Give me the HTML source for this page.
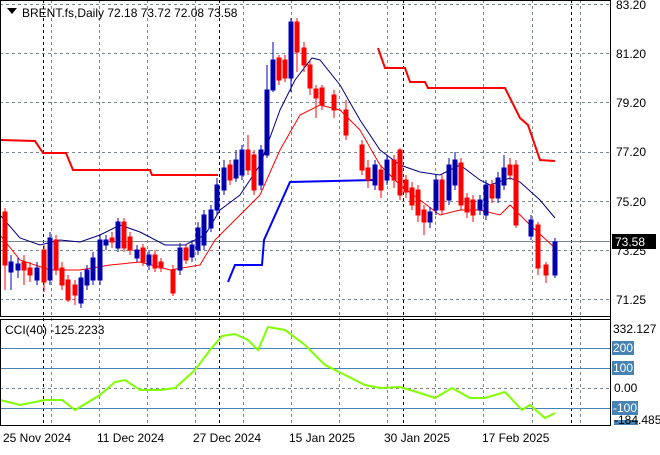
<!DOCTYPE html>
<html><head><meta charset="utf-8"><style>
body{margin:0;background:#fff;width:660px;height:450px;overflow:hidden;font-family:"Liberation Sans",sans-serif}
svg text{font-family:"Liberation Sans",sans-serif;font-size:12px;fill:#000}
</style></head><body>
<svg width="660" height="450" viewBox="0 0 660 450" xmlns="http://www.w3.org/2000/svg">
<g stroke="#7a8593" stroke-dasharray="3,3" stroke-width="1">
<line x1="0" y1="4.5" x2="610" y2="4.5"/><line x1="0" y1="53.5" x2="610" y2="53.5"/><line x1="0" y1="102.5" x2="610" y2="102.5"/><line x1="0" y1="152.5" x2="610" y2="152.5"/><line x1="0" y1="201.5" x2="610" y2="201.5"/><line x1="0" y1="250.5" x2="610" y2="250.5"/><line x1="0" y1="299.5" x2="610" y2="299.5"/>
<line x1="0" y1="388.5" x2="610" y2="388.5"/>
<line x1="51.5" y1="0" x2="51.5" y2="426"/><line x1="99.5" y1="0" x2="99.5" y2="426"/><line x1="147.5" y1="0" x2="147.5" y2="426"/><line x1="195.5" y1="0" x2="195.5" y2="426"/><line x1="243.5" y1="0" x2="243.5" y2="426"/><line x1="291.5" y1="0" x2="291.5" y2="426"/><line x1="339.5" y1="0" x2="339.5" y2="426"/><line x1="387.5" y1="0" x2="387.5" y2="426"/><line x1="435.5" y1="0" x2="435.5" y2="426"/><line x1="483.5" y1="0" x2="483.5" y2="426"/><line x1="532.5" y1="0" x2="532.5" y2="426"/><line x1="580.5" y1="0" x2="580.5" y2="426"/>
</g>
<g stroke="#000" stroke-dasharray="3,3"><line x1="43.5" y1="0" x2="43.5" y2="426"/><line x1="219.5" y1="0" x2="219.5" y2="426"/><line x1="403.5" y1="0" x2="403.5" y2="426"/><line x1="571.5" y1="0" x2="571.5" y2="426"/></g>
<g stroke="#4682b4"><line x1="0" y1="348.5" x2="610" y2="348.5"/><line x1="0" y1="368.5" x2="610" y2="368.5"/><line x1="0" y1="408.5" x2="610" y2="408.5"/></g>
<line x1="0" y1="241.5" x2="610" y2="241.5" stroke="#7a8593"/>
<!-- indicators -->
<polyline fill="none" stroke="#f00" stroke-width="2" points="0,140 35,141 43,153 66,153 73,170 150,170 152,175 218,175"/>
<polyline fill="none" stroke="#f00" stroke-width="2" points="378,48 385,68 405,68 410,82 425,82 428,88 505,88 520,118 528,125 540,160 555,161"/>
<polyline fill="none" stroke="#00f" stroke-width="2" points="228,282 235,265 262,265 264,240 290,182 375,180"/>
<polyline fill="none" stroke="#000080" stroke-width="1" points="0,215 20,238 40,245 60,240 80,242 100,235 120,225 140,232 165,245 185,245 205,235 220,210 240,195 260,165 280,110 295,80 312,58 320,60 340,85 360,120 380,150 400,165 420,172 440,175 460,165 480,180 490,185 510,178 520,182 540,200 555,218"/>
<polyline fill="none" stroke="#f00" stroke-width="1" points="0,235 20,260 50,270 80,270 110,265 140,262 170,270 200,265 215,240 240,215 260,195 280,150 300,115 320,105 340,110 360,130 380,165 400,185 420,200 440,215 460,210 480,210 500,215 510,205 530,225 555,248"/>
<!-- candles -->
<g stroke-width="1">
<g fill="#f00" stroke="#f00">
<line x1="5" y1="208" x2="5" y2="290"/><rect x="3" y="212" width="4" height="53"/>
<line x1="24" y1="255" x2="24" y2="285"/><rect x="22" y="262" width="4" height="8"/>
<line x1="30" y1="262" x2="30" y2="282"/><rect x="28" y="268" width="4" height="7"/>
<line x1="44" y1="245" x2="44" y2="292"/><rect x="42" y="250" width="4" height="32"/>
<line x1="56" y1="235" x2="56" y2="275"/><rect x="54" y="240" width="4" height="30"/>
<line x1="62" y1="262" x2="62" y2="290"/><rect x="60" y="268" width="4" height="17"/>
<line x1="68" y1="275" x2="68" y2="302"/><rect x="66" y="280" width="4" height="20"/>
<line x1="75" y1="280" x2="75" y2="305"/><rect x="73" y="285" width="4" height="10"/>
<line x1="112" y1="232" x2="112" y2="248"/><rect x="110" y="238" width="4" height="4"/>
<line x1="124" y1="218" x2="124" y2="252"/><rect x="122" y="222" width="4" height="26"/>
<line x1="130" y1="232" x2="130" y2="255"/><rect x="128" y="237" width="4" height="13"/>
<line x1="143" y1="244" x2="143" y2="266"/><rect x="141" y="248" width="4" height="14"/>
<line x1="155" y1="250" x2="155" y2="272"/><rect x="153" y="255" width="4" height="13"/>
<line x1="161" y1="258" x2="161" y2="272"/><rect x="159" y="262" width="4" height="6"/>
<line x1="173" y1="265" x2="173" y2="296"/><rect x="171" y="270" width="4" height="23"/>
<line x1="186" y1="244" x2="186" y2="264"/><rect x="184" y="248" width="4" height="12"/>
<line x1="230" y1="160" x2="230" y2="185"/><rect x="228" y="165" width="4" height="15"/>
<line x1="248" y1="135" x2="248" y2="175"/><rect x="246" y="150" width="4" height="20"/>
<line x1="254" y1="150" x2="254" y2="195"/><rect x="252" y="155" width="4" height="35"/>
<line x1="279" y1="55" x2="279" y2="85"/><rect x="277" y="58" width="4" height="22"/>
<line x1="285" y1="55" x2="285" y2="82"/><rect x="283" y="60" width="4" height="18"/>
<line x1="297" y1="18" x2="297" y2="72"/><rect x="295" y="22" width="4" height="30"/>
<line x1="304" y1="42" x2="304" y2="72"/><rect x="302" y="48" width="4" height="17"/>
<line x1="310" y1="60" x2="310" y2="95"/><rect x="308" y="65" width="4" height="23"/>
<line x1="316" y1="85" x2="316" y2="118"/><rect x="314" y="89" width="4" height="9"/>
<line x1="322" y1="85" x2="322" y2="110"/><rect x="320" y="88" width="4" height="17"/>
<line x1="334" y1="90" x2="334" y2="118"/><rect x="332" y="95" width="4" height="15"/>
<line x1="346" y1="100" x2="346" y2="140"/><rect x="344" y="110" width="4" height="25"/>
<line x1="362" y1="140" x2="362" y2="175"/><rect x="360" y="145" width="4" height="25"/>
<line x1="368" y1="160" x2="368" y2="188"/><rect x="366" y="168" width="4" height="12"/>
<line x1="381" y1="165" x2="381" y2="198"/><rect x="379" y="170" width="4" height="20"/>
<line x1="394" y1="155" x2="394" y2="188"/><rect x="392" y="160" width="4" height="20"/>
<line x1="400" y1="148" x2="400" y2="200"/><rect x="398" y="150" width="4" height="45"/>
<line x1="406" y1="175" x2="406" y2="198"/><rect x="404" y="180" width="4" height="12"/>
<line x1="412" y1="182" x2="412" y2="210"/><rect x="410" y="188" width="4" height="17"/>
<line x1="418" y1="185" x2="418" y2="222"/><rect x="416" y="190" width="4" height="25"/>
<line x1="424" y1="205" x2="424" y2="235"/><rect x="422" y="210" width="4" height="12"/>
<line x1="442" y1="175" x2="442" y2="215"/><rect x="440" y="180" width="4" height="30"/>
<line x1="461" y1="158" x2="461" y2="210"/><rect x="459" y="163" width="4" height="42"/>
<line x1="467" y1="193" x2="467" y2="218"/><rect x="465" y="198" width="4" height="14"/>
<line x1="473" y1="195" x2="473" y2="222"/><rect x="471" y="200" width="4" height="15"/>
<line x1="492" y1="180" x2="492" y2="203"/><rect x="490" y="185" width="4" height="13"/>
<line x1="510" y1="158" x2="510" y2="180"/><rect x="508" y="165" width="4" height="10"/>
<line x1="516" y1="160" x2="516" y2="228"/><rect x="514" y="165" width="4" height="60"/>
<line x1="538" y1="222" x2="538" y2="275"/><rect x="536" y="225" width="4" height="43"/>
<line x1="546" y1="262" x2="546" y2="283"/><rect x="544" y="265" width="4" height="10"/>
</g>
<g fill="#0000a0" stroke="#0000c0">
<line x1="11" y1="255" x2="11" y2="290"/><rect x="9" y="262" width="4" height="10"/>
<line x1="18" y1="258" x2="18" y2="278"/><rect x="16" y="264" width="4" height="6"/>
<line x1="37" y1="262" x2="37" y2="285"/><rect x="35" y="268" width="4" height="12"/>
<line x1="50" y1="232" x2="50" y2="285"/><rect x="48" y="238" width="4" height="42"/>
<line x1="81" y1="272" x2="81" y2="308"/><rect x="79" y="278" width="4" height="25"/>
<line x1="87" y1="265" x2="87" y2="290"/><rect x="85" y="270" width="4" height="15"/>
<line x1="93" y1="252" x2="93" y2="285"/><rect x="91" y="258" width="4" height="22"/>
<line x1="100" y1="235" x2="100" y2="285"/><rect x="98" y="240" width="4" height="40"/>
<line x1="106" y1="235" x2="106" y2="250"/><rect x="104" y="240" width="4" height="5"/>
<line x1="118" y1="218" x2="118" y2="252"/><rect x="116" y="222" width="4" height="26"/>
<line x1="137" y1="245" x2="137" y2="262"/><rect x="135" y="250" width="4" height="8"/>
<line x1="149" y1="250" x2="149" y2="270"/><rect x="147" y="255" width="4" height="10"/>
<line x1="180" y1="243" x2="180" y2="275"/><rect x="178" y="248" width="4" height="22"/>
<line x1="192" y1="240" x2="192" y2="262"/><rect x="190" y="245" width="4" height="12"/>
<line x1="198" y1="222" x2="198" y2="255"/><rect x="196" y="228" width="4" height="22"/>
<line x1="204" y1="210" x2="204" y2="250"/><rect x="202" y="215" width="4" height="30"/>
<line x1="211" y1="205" x2="211" y2="232"/><rect x="209" y="210" width="4" height="18"/>
<line x1="217" y1="178" x2="217" y2="215"/><rect x="215" y="185" width="4" height="25"/>
<line x1="224" y1="160" x2="224" y2="195"/><rect x="222" y="168" width="4" height="22"/>
<line x1="236" y1="150" x2="236" y2="182"/><rect x="234" y="160" width="4" height="18"/>
<line x1="242" y1="145" x2="242" y2="180"/><rect x="240" y="150" width="4" height="25"/>
<line x1="261" y1="145" x2="261" y2="190"/><rect x="259" y="150" width="4" height="35"/>
<line x1="267" y1="65" x2="267" y2="158"/><rect x="265" y="90" width="4" height="65"/>
<line x1="273" y1="42" x2="273" y2="92"/><rect x="271" y="60" width="4" height="30"/>
<line x1="291" y1="18" x2="291" y2="92"/><rect x="289" y="22" width="4" height="56"/>
<line x1="375" y1="160" x2="375" y2="190"/><rect x="373" y="165" width="4" height="20"/>
<line x1="387" y1="155" x2="387" y2="185"/><rect x="385" y="160" width="4" height="20"/>
<line x1="430" y1="207" x2="430" y2="228"/><rect x="428" y="212" width="4" height="10"/>
<line x1="436" y1="175" x2="436" y2="215"/><rect x="434" y="180" width="4" height="30"/>
<line x1="449" y1="158" x2="449" y2="205"/><rect x="447" y="165" width="4" height="35"/>
<line x1="455" y1="152" x2="455" y2="190"/><rect x="453" y="160" width="4" height="25"/>
<line x1="480" y1="195" x2="480" y2="215"/><rect x="478" y="200" width="4" height="10"/>
<line x1="486" y1="180" x2="486" y2="220"/><rect x="484" y="185" width="4" height="30"/>
<line x1="498" y1="172" x2="498" y2="203"/><rect x="496" y="178" width="4" height="20"/>
<line x1="504" y1="155" x2="504" y2="190"/><rect x="502" y="168" width="4" height="17"/>
<line x1="531" y1="215" x2="531" y2="240"/><rect x="529" y="220" width="4" height="16"/>
<line x1="555" y1="238" x2="555" y2="278"/><rect x="553" y="242" width="4" height="33"/>
</g>
</g>
<polyline fill="none" stroke="#7fff00" stroke-width="2" points="0,400 20,405 45,400 62,400 75,410 100,395 115,382 125,380 140,390 160,390 175,388 195,370 210,350 222,336 235,334 248,340 258,350 268,327 285,330 305,345 325,365 345,375 365,385 380,388 400,387 420,393 435,398 452,388 470,398 485,398 505,392 522,410 530,405 545,418 555,413"/>
<!-- frames -->
<rect x="0.5" y="0.5" width="610" height="316" fill="none" stroke="#000"/>
<rect x="0.5" y="319.5" width="610" height="106" fill="none" stroke="#000"/>
<line x1="610.5" y1="0" x2="610.5" y2="426" stroke="#000"/>
<path d="M7 8 L17 8 L12 14 Z" fill="#000"/>
<text x="22" y="17">BRENT.fs,Daily  72.18 73.72 72.08 73.58</text>
<text x="616" y="9">83.20</text><text x="616" y="58">81.20</text><text x="616" y="107">79.20</text><text x="616" y="156">77.20</text><text x="616" y="206">75.20</text><text x="616" y="255">73.25</text><text x="616" y="304">71.25</text>
<rect x="612" y="234" width="44" height="15" fill="#000"/>
<text x="615" y="246" style="fill:#fff">73.58</text>
<text x="613" y="333">332.127</text>
<rect x="612" y="341" width="22" height="14" fill="#4682b4"/><text x="613" y="352" style="fill:#fff">200</text>
<rect x="612" y="361" width="22" height="14" fill="#4682b4"/><text x="613" y="372" style="fill:#fff">100</text>
<text x="614" y="392">0.00</text>
<rect x="612" y="401" width="26" height="14" fill="#4682b4"/><text x="613" y="412" style="fill:#fff">-100</text>
<rect x="614" y="420" width="24" height="5" fill="#4682b4"/>
<text x="614" y="424">-184.485</text>
<text x="3" y="442">25 Nov 2024</text><text x="97" y="442">11 Dec 2024</text><text x="193" y="442">27 Dec 2024</text><text x="289" y="442">15 Jan 2025</text><text x="384" y="442">30 Jan 2025</text><text x="482" y="442">17 Feb 2025</text>
<text x="5" y="334">CCI(40) -125.2233</text>
</svg>
</body></html>
